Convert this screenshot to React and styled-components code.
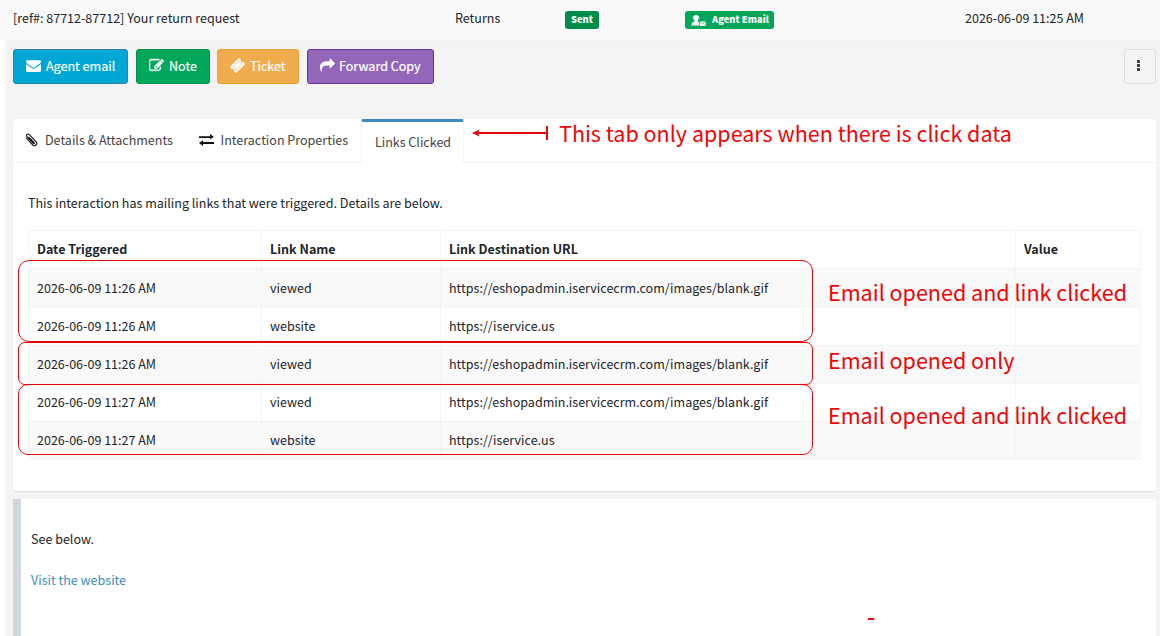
import React from "react";
import styled, { createGlobalStyle } from "styled-components";

const Global = createGlobalStyle`
  * { box-sizing: border-box; }
  body {
    margin: 0;
    background: #fff;
    color: #212529;
    font-family: "Noto Sans CJK SC", "Open Sans", sans-serif;
    font-size: 12.54px;
    line-height: 20px;
    overflow: hidden;
  }
`;

const Page = styled.main`
  position: relative;
  width: 1160px;
  height: 636px;
  overflow: hidden;
  display: flex;
  flex-direction: column;
  white-space: nowrap;
`;

const Header = styled.header`
  height: 40px;
  flex: none;
  padding: 0 0 4px 13px;
  background: #f9f9f9;
  display: grid;
  grid-template-columns: 442px 110px 120px 280px 1fr;
  align-items: center;
`;

const Badge = styled.span`
  display: inline-flex;
  align-items: center;
  gap: 5px;
  height: 18px;
  width: ${(p) => p.$w}px;
  padding: 0 0 1px 6px;
  margin-top: 2px;
  border-radius: 3px;
  background: ${(p) => p.$bg};
  color: #fff;
  font-size: 9.4px;
  font-weight: 900;
  vertical-align: middle;
  svg { position: relative; top: 1px; }
`;

const Content = styled.div`
  flex: 1;
  margin-left: 5px;
  padding: 8px 4px 0 8px;
  background: #f4f4f4;
  border-top: 1px solid #f1f1f1;
  display: flex;
  flex-direction: column;
`;

const Toolbar = styled.div`
  height: 35px;
  display: flex;
`;

const Button = styled.button`
  width: ${(p) => p.$w}px;
  height: 35px;
  margin: 0 ${(p) => p.$gap ?? 8}px 0 0;
  padding: 0 0 2px 12px;
  display: flex;
  align-items: center;
  gap: ${(p) => p.$iconGap ?? 5}px;
  border: 1px solid ${(p) => p.$border};
  border-radius: 3px;
  background: ${(p) => p.$bg};
  color: #fff;
  font: inherit;
  -webkit-text-stroke: 0.2px #fff;
`;

const MoreButton = styled(Button)`
  margin: 0 0 0 auto;
  padding: 0 3px 2px 0;
  justify-content: center;
`;

const Panel = styled.section`
  height: 372px;
  margin-top: 35px;
  flex: none;
  background: #fff;
  border-radius: 3px;
  box-shadow: 0 1px 1px rgba(0, 0, 0, 0.1);
`;

const Tabs = styled.nav`
  height: 44px;
  display: flex;
  border-bottom: 1px solid #f4f4f4;
`;

const Tab = styled.div`
  width: ${(p) => p.$w}px;
  height: 44px;
  padding: ${(p) => (p.$active ? "10px 0 0 12.5px" : "11px 0 0 12px")};
  display: flex;
  align-items: flex-start;
  gap: 7px;
  color: #444;
  background: #fff;
  border-bottom: ${(p) => (p.$active ? "0" : "1px solid #f4f4f4")};
  border-top: ${(p) => (p.$active ? "3px solid #3c8dbc" : "0")};
  border-left: ${(p) => (p.$active ? "1px solid #f4f4f4" : "0")};
  border-right: ${(p) => (p.$active ? "1px solid #f4f4f4" : "0")};
  border-radius: ${(p) => (p.$active ? "2px 2px 0 0" : "3px 0 0 0")};
  svg { margin-top: 3px; color: #111; }
`;

const PanelBody = styled.div`
  padding: 30px 15px 0;
`;

const Intro = styled.p`
  margin: 0 0 17px;
`;

const Table = styled.div`
  width: 1113px;
  border: 1px solid #f4f4f4;
  border-width: 1px 0 0 1px;
`;

const Row = styled.div`
  display: grid;
  grid-template-columns: 233px 179px 575px 125px;
  height: ${(p) => (p.$head ? 39 : 38)}px;
  font-weight: ${(p) => (p.$head ? 700 : 400)};
  background: ${(p) => (p.$striped ? "#f9f9f9" : "#fff")};
`;

const Cell = styled.div`
  padding: 8px 8px 0;
  border-right: 1px solid #f4f4f4;
  border-bottom: ${(p) => (p.$head ? 2 : 1)}px solid #f4f4f4;
`;

const Message = styled.article`
  flex: 1;
  margin-top: 8px;
  padding: 30px 10px 0;
  border-left: 8px solid #d2d6de;
  background: #fff;
  p { margin: 0 0 21px; }
`;

const Link = styled.a`
  color: #3c8dbc;
`;

const Note = styled.div`
  position: absolute;
  left: ${(p) => p.$x}px;
  top: ${(p) => p.$y}px;
  color: #ee0508;
  font-size: 21.52px;
  line-height: 30px;
`;

const Outline = styled.div`
  position: absolute;
  left: 18px;
  top: ${(p) => p.$y}px;
  width: 795px;
  height: ${(p) => p.$h}px;
  border: 1px solid #e60808;
  border-radius: ${(p) => p.$r}px;
`;

const Arrow = styled.svg`
  position: absolute;
  left: 472px;
  top: 125px;
`;

const Dash = styled.i`
  position: absolute;
  left: 868px;
  top: 618px;
  width: 6px;
  height: 2px;
  background: #ee0508;
`;

const paths = {
  envelope:
    "M1792 710v794q0 66-47 113t-113 47h-1472q-66 0-113-47t-47-113v-794q44 49 101 87 362 246 497 345 57 42 92.5 65.5t94.5 48 110 24.5h2q51 0 110-24.5t94.5-48 92.5-65.5q170-123 498-345 57-39 100-87zm0-294q0 79-49 151t-122 123q-376 261-468 325-10 7-42.5 31t-54 38.5-52 32.5-57.5 27-50 9h-2q-23 0-50-9t-57.5-27-52-32.5-54-38.5-42.5-31q-91-64-262-182.5t-205-142.5q-62-42-117-115.5t-55-136.5q0-78 41.5-130t118.5-52h1472q65 0 112.5 47t47.5 113z",
  edit:
    "M888 1184l116-116-152-152-116 116v56h96v96h56zm440-720q-16-16-33 1l-350 350q-17 17-1 33t33-1l350-350q17-17 1-33zm80 594v190q0 119-84.5 203.5t-203.5 84.5h-832q-119 0-203.5-84.5t-84.5-203.5v-832q0-119 84.5-203.5t203.5-84.5h832q63 0 117 25 15 7 18 23 3 17-9 29l-49 49q-14 14-32 8-23-6-45-6h-832q-66 0-113 47t-47 113v832q0 66 47 113t113 47h832q66 0 113-47t47-113v-126q0-13 9-22l64-64q15-15 35-7t20 29zm-96-738l288 288-672 672h-288v-288zm444 132l-92 92-288-288 92-92q28-28 68-28t68 28l152 152q28 28 28 68t-28 68z",
  ticket:
    "M1024 452l316 316-572 572-316-316zm-211 979l618-618q19-19 19-45t-19-45l-362-362q-18-18-45-18t-45 18l-618 618q-19 19-19 45t19 45l362 362q18 18 45 18t45-18zm889-637l-907 908q-37 37-90.5 37t-90.5-37l-126-126q56-56 56-136t-56-136-136-56-136 56l-125-126q-37-37-37-90.5t37-90.5l907-906q37-37 90.5-37t90.5 37l125 125q-56 56-56 136t56 136 136 56 136-56l126 125q37 37 37 90.5t-37 90.5z",
  share:
    "M1792 640q0 26-19 45l-512 512q-19 19-45 19t-45-19-19-45v-256h-224q-98 0-175.5 6t-154 21.5-133 42.5-105.5 69.5-80 101-48.5 138.5-17.5 181q0 55 5 123 0 6 2.5 23.5t2.5 26.5q0 15-8.5 25t-23.5 10q-16 0-28-17-7-9-13-22t-13.5-30-10.5-24q-127-285-127-451 0-199 53-333 162-403 875-403h224v-256q0-26 19-45t45-19 45 19l512 512q19 19 19 45z",
};

const strokes = { edit: 50, ticket: 60 };

const Icon = ({ name, size = 15 }) => (
  <svg width={size} height={size} viewBox="0 0 1792 1792" fill="currentColor" stroke="currentColor" strokeWidth={strokes[name] ?? 0}>
    <path d={paths[name]} />
  </svg>
);

const PaperclipIcon = () => (
  <svg width="13" height="14" viewBox="0 0 13 14" fill="none" stroke="currentColor" strokeWidth="1.15" strokeLinecap="round">
    <path d="M4.1 4.4L9 9.7C9.7 10.5 9 11.1 8.3 10.4L2.5 4.2C.2 1.9 2.5-.1 4.6 1.9L10.9 8.6C13.2 11 10 14.2 7.6 11.8L1.4 5.2" />
  </svg>
);

const ExchangeIcon = () => (
  <svg width="15" height="14" viewBox="0 0 15 14" fill="currentColor">
    <path d="M0 3.2H11V1L15 4.1L11 6.2V5.1H0zM15 9H4V7.2L0 10L4 13V10.9H15z" />
  </svg>
);

const AgentIcon = () => (
  <svg width="16" height="14" viewBox="0 0 16 14" fill="#fff">
    <path d="M1.4 5.5A3.9 4.6 0 0 1 8.6 5.5" fill="none" stroke="#fff" strokeWidth=".8" />
    <path d="M2.5 4.7A2.6 2.6 0 0 1 7.7 4.7Q7.5 7.6 6.3 8.3L8 9.2V12.4H0.4Q0.2 9.3 3.8 8.3Q2.6 7.6 2.5 4.7z" />
    <path d="M8.7 8.4H14.7V12.9H8.7z" />
    <path d="M8.8 8.7L11.7 10.7L14.6 8.7" fill="none" stroke="#00a65a" strokeWidth=".6" />
  </svg>
);

const DotsIcon = () => (
  <svg width="3" height="11" viewBox="0 0 3 11" fill="#444">
    <path d="M0 0h3v3H0zM0 4h3v3H0zM0 8h3v3H0z" />
  </svg>
);

const BLANK = "https://eshopadmin.iservicecrm.com/images/blank.gif";
const rows = [
  ["2026-06-09 11:26 AM", "viewed", BLANK],
  ["2026-06-09 11:26 AM", "website", "https://iservice.us"],
  ["2026-06-09 11:26 AM", "viewed", BLANK],
  ["2026-06-09 11:27 AM", "viewed", BLANK],
  ["2026-06-09 11:27 AM", "website", "https://iservice.us"],
];

export default function App() {
  return (
    <Page>
      <Global />
      <Header>
        <span>[ref#: 87712-87712] Your return request</span>
        <span>Returns</span>
        <div><Badge $w={34} $bg="#008d4c">Sent</Badge></div>
        <div><Badge $w={89} $bg="#00a65a"><AgentIcon />Agent Email</Badge></div>
        <span>2026-06-09 11:25 AM</span>
      </Header>
      <Content>
        <Toolbar>
          <Button $w={115} $bg="#00a7d4" $border="#367fa9"><Icon name="envelope" />Agent email</Button>
          <Button $w={74} $gap={7} $bg="#00a65a" $border="#008d4c"><Icon name="edit" />Note</Button>
          <Button $w={82} $bg="#f0ad4e" $border="#eea236"><Icon name="ticket" />Ticket</Button>
          <Button $w={127} $bg="#9466ba" $border="#6b2fa5" $iconGap={4}><Icon name="share" />Forward Copy</Button>
          <MoreButton $w={32} $bg="#f4f4f4" $border="#ddd"><DotsIcon /></MoreButton>
        </Toolbar>
        <Panel>
          <Tabs>
            <Tab $w={173.5}><PaperclipIcon />Details &amp; Attachments</Tab>
            <Tab $w={174.9}><ExchangeIcon />Interaction Properties</Tab>
            <Tab $w={102.6} $active>Links Clicked</Tab>
          </Tabs>
          <PanelBody>
            <Intro>This interaction has mailing links that were triggered. Details are below.</Intro>
            <Table>
              <Row $head>
                {["Date Triggered", "Link Name", "Link Destination URL", "Value"].map((h) => (
                  <Cell $head key={h}>{h}</Cell>
                ))}
              </Row>
              {rows.map((r, i) => (
                <Row key={i} $striped={i % 2 === 0}>
                  {r.map((c) => <Cell key={c}>{c}</Cell>)}
                  <Cell />
                </Row>
              ))}
            </Table>
          </PanelBody>
        </Panel>
        <Message>
          <p>See below.</p>
          <Link>Visit the website</Link>
        </Message>
      </Content>
      <Outline $y={260} $h={82} $r={11} />
      <Outline $y={342} $h={43} $r={7} />
      <Outline $y={384} $h={71} $r={10} />
      <Arrow width="78" height="17" viewBox="0 0 78 17">
        <path d="M5 8H76" stroke="#e60808" strokeWidth="2" />
        <path d="M0 8L7.5 4.5L6 8L7.5 11.5z" fill="#e60808" />
        <path d="M75 1V15" stroke="#e60808" strokeWidth="2" />
      </Arrow>
      <Note $x={559} $y={118}>This tab only appears when there is click data</Note>
      <Note $x={828} $y={277}>Email opened and link clicked</Note>
      <Note $x={828} $y={345}>Email opened only</Note>
      <Note $x={828} $y={400}>Email opened and link clicked</Note>
      <Dash />
    </Page>
  );
}
